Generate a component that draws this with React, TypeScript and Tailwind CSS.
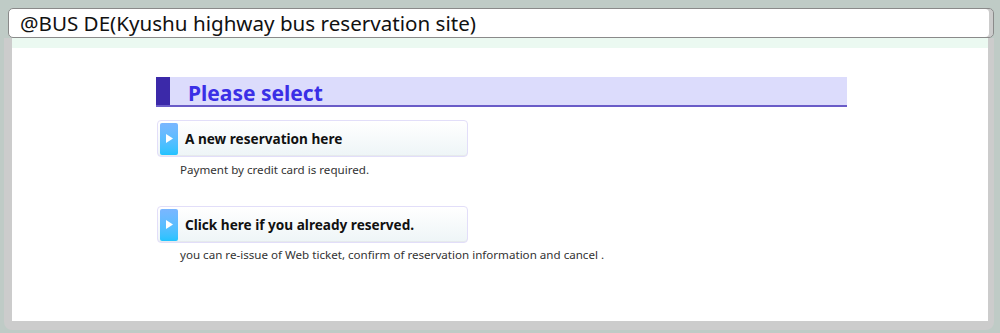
import React from "react";

const font = { fontFamily: '"Noto Sans", "Open Sans", sans-serif' };

function Btn({ label }: { label: string }) {
  return (
    <div className="w-[311px] h-[37px] rounded-[4px] border border-[#e2def9] bg-gradient-to-b from-white to-[#eef5f7] flex items-center pl-[2px] shadow-[inset_0_-1px_0_#e6eaec]">
      <div className="w-[18px] h-[32px] rounded-[2px] bg-gradient-to-b from-[#7ab6ff] to-[#1fc3ff] flex items-center justify-center">
        <svg width="7" height="9" viewBox="0 0 7 9">
          <polygon points="0,0 7,4.5 0,9" fill="#ffffff" />
        </svg>
      </div>
      <span className="ml-[7px] text-[13.6px] font-bold text-[#111] leading-none">{label}</span>
    </div>
  );
}

export default function App() {
  return (
    <div className="w-[1000px] h-[333px] bg-[#bfcbc6] pt-[8px] pl-[4px] pr-[6px] overflow-hidden" style={font}>
      <div className="ml-[4px] h-[30px] rounded-[5px] border border-[#8a8a8a] bg-white flex items-center pl-[11px] pt-[1px] shadow-[inset_-4px_0_0_#cccccc]">
        <span className="text-[20.6px] text-[#111] leading-none">@BUS DE(Kyushu highway bus reservation site)</span>
      </div>
      <div className="bg-[#cccccc] pl-[8px] pr-[6px] pb-[9px] rounded-b-[8px]">
        <div className="h-[10px] bg-[#ebf9f1]" />
        <div className="h-[273px] bg-white pl-[144px] pt-[29px]">
          <div className="w-[691px] h-[30px] bg-[#dcdcfc] border-b-[2px] border-[#6a5cc8] flex items-stretch">
            <div className="w-[14px] bg-[#3b29a9]" />
            <div className="ml-[18px] flex items-center text-[21px] font-bold text-[#3a2fe6] leading-none pt-[4px]">Please select</div>
          </div>
          <div className="mt-[13px] ml-[1px]">
            <Btn label="A new reservation here" />
          </div>
          <div className="ml-[24px] mt-[6px] text-[11.6px] text-[#333] leading-[14px]">Payment by credit card is required.</div>
          <div className="mt-[29px] ml-[1px]">
            <Btn label="Click here if you already reserved." />
          </div>
          <div className="ml-[24px] mt-[5px] text-[11.6px] text-[#333] leading-[14px]">you can re-issue of Web ticket, confirm of reservation information and cancel .</div>
        </div>
      </div>
    </div>
  );
}
